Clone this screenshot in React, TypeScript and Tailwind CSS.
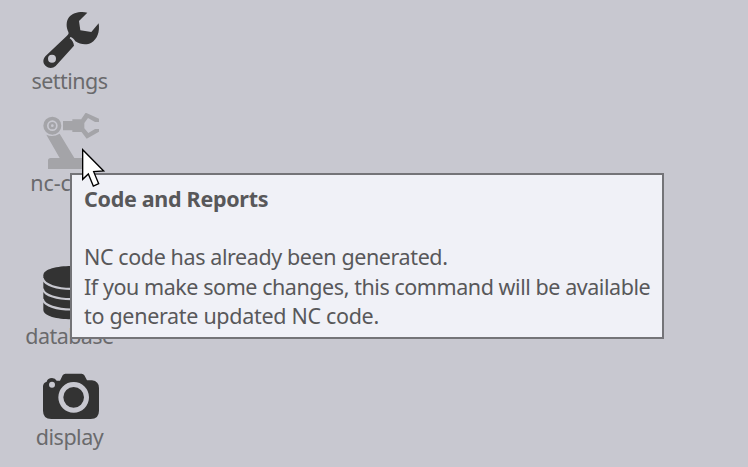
import type { ReactNode } from "react";

function Item({ label, box, className, children }: { label: string; box: string; className: string; children: ReactNode }) {
  return (
    <div className={`flex w-[139px] flex-col items-center ${className}`}>
      <svg viewBox={box} className="mt-[11px] ml-[3px] h-[58px] w-[58px] shrink-0">{children}</svg>
      <span className="-mt-px h-[26px] text-[21.5px] leading-[26px] whitespace-nowrap text-[#6a6a6c]">{label}</span>
    </div>
  );
}

export default function App() {
  return (
    <div className="relative h-[467px] w-[748px] overflow-hidden bg-[#c8c8d0] font-['Noto_Sans',sans-serif]">
      <nav className="flex flex-col">
        <Item label="settings" box="66 33 174 174" className="h-[102px] tracking-[-0.55px]">
          <path
            fill="#333"
            fillRule="evenodd"
            d="M202 38C183 33 158 38 147 52C138 64 138 81 145 96C147 101 145 103 141 107L76 169C68 178 68 190 77 198C86 206 98 206 107 198L162 137C161 128 157 121 149 115L151 111C157 112 162 118 166 124C180 133 199 137 214 128C232 118 240 95 236 70L214 96L181 91L177 63ZM96 164A12 12 0 1 1 96 188A12 12 0 1 1 96 164Z"
          />
        </Item>
        <Item label="nc-code" box="66 39 174 174" className="h-[153px] tracking-[-0.1px]">
          <g fill="#a4a4a8">
            <path d="M79 104Q98 114 119 101L163 174H203Q210 174 210 181V207H84V182Q84 174 92 174H119Z" />
            <path d="M129 63H157V58H186V96H157V91H129Z" />
            <path
              fillRule="evenodd"
              d="M97 50A27 27 0 1 1 97 104A27 27 0 1 1 97 50ZM97 61A16 16 0 1 0 97 93A16 16 0 1 0 97 61Z"
            />
            <circle cx="97" cy="77" r="11" />
            <path d="M184 57L197 38L237 56V66H225L204 54L193 69V85L205 99L225 87H237V95L200 116L184 95Z" />
          </g>
          <circle cx="97" cy="77" r="4" fill="#c8c8d0" />
        </Item>
        <Item label="database" box="66 33 174 174" className="h-[101px] tracking-[-0.55px]">
          <path fill="#333" d="M70 61C70 24 237 24 237 61V164C237 202 70 202 70 164Z" />
          <g fill="none" stroke="#c8c8d0" strokeWidth="6.5">
            <path d="M68 70C77 112 230 112 239 70" />
            <path d="M68 101C77 143 230 143 239 101" />
            <path d="M68 132C77 174 230 174 239 132" />
          </g>
        </Item>
        <Item label="display" box="66 21 174 174" className="h-[101px] tracking-[-0.5px]">
          <path
            fill="#333"
            d="M69 79Q69 69 80 65Q83 54 96 54Q106 54 110 62H120L128 46Q131 41 136 41H185Q190 41 193 46L201 61H216Q237 64 237 84V152Q237 177 212 177H94Q69 177 69 152Z"
          />
          <circle cx="96" cy="74" r="9" fill="#c8c8d0" />
          <circle cx="161" cy="112" r="38.5" fill="#333" stroke="#c8c8d0" strokeWidth="15" />
        </Item>
      </nav>

      <div
        role="tooltip"
        className="absolute top-[173px] left-[70px] flex h-[166px] w-[594px] flex-col border-2 border-[#747478] bg-[#f0f1f7] pt-[9px] pl-3 text-[21.5px] leading-[29.5px] whitespace-nowrap text-[#58585a]"
      >
        <strong className="mb-[28.5px] font-bold tracking-[-0.3px]">Code and Reports</strong>
        <span className="tracking-[-0.4px]">NC code has already been generated.</span>
        <span className="tracking-[-0.44px]">If you make some changes, this command will be available</span>
        <span className="tracking-[-0.31px]">to generate updated NC code.</span>
      </div>

      <svg viewBox="186 145 72 120" className="absolute top-[148px] left-[82px] h-[40px] w-[24px]">
        <path
          d="M188 150V239L205 223L220 259L236 252L221 216L251 214Z"
          fill="#fff"
          stroke="#000"
          strokeWidth="4"
        />
      </svg>
    </div>
  );
}
